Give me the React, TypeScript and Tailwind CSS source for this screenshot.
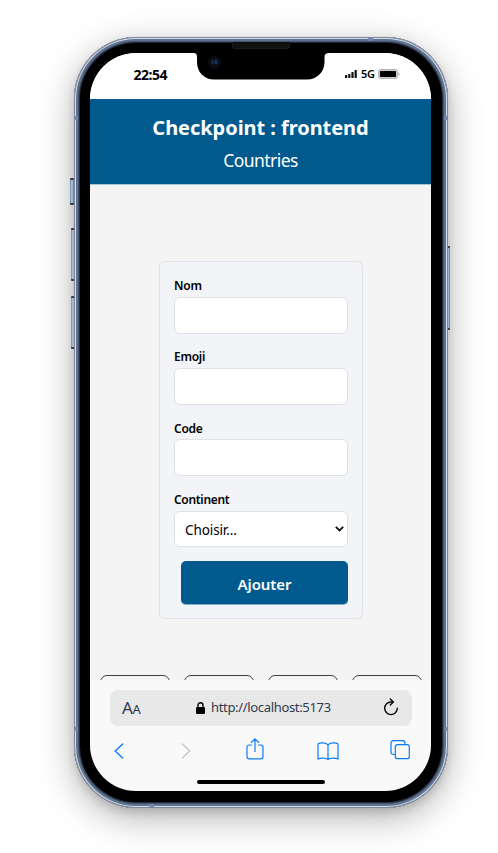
import React from "react";

function Field({ label }: { label: string }) {
  return (
    <label className="block h-[71.4px]">
      <span className="block h-[19.7px] text-[12px] leading-[18.6px] font-semibold tracking-[-0.25px]">{label}</span>
      <input className="block h-[37px] w-[174px] rounded-[6px] border border-[#dee1e6] bg-white px-2.5" />
    </label>
  );
}

function SideButton({ place }: { place: string }) {
  return (
    <div
      className={`absolute w-1 rounded-[1px] border-y-2 border-[#343e50] bg-gradient-to-r from-[#7587a5] via-[#b9cae3] to-[#5d7090] ${place}`}
    />
  );
}

function Notch() {
  return (
    <div className="absolute top-0 left-[103px] h-[27px] w-[136px]">
      <svg width="136" height="27" viewBox="0 0 136 27" className="block">
        <path d="M0 0H136C133 0 131.500 1 131.500 4V9C131.500 19 124 26.500 114 26.500H21C11 26.500 4 19 4 9V4C4 1 3 0 0 0Z" fill="#000" />
        <circle cx="21.500" cy="9.500" r="6.500" fill="#0b0d10" />
        <ellipse cx="19.500" cy="9" rx="1.300" ry="2.500" fill="#19303f" />
        <ellipse cx="23" cy="9" rx="1.400" ry="2.500" fill="#1e3478" />
      </svg>
      <div className="absolute -top-[11px] left-[39px] h-[7px] w-[58px] rounded-b-[3px] border border-t-0 border-[#1a1a1a] bg-[#101010]" />
    </div>
  );
}

function StatusBar() {
  return (
    <div className="flex h-[46px] shrink-0 items-start justify-between bg-white pl-[43.500px] pr-[31px] text-black">
      <span className="mt-[13px] text-[14px] leading-[18px] font-bold tracking-[-0.5px]">22:54</span>
      <div className="mt-[13px] flex h-4 items-center">
        <svg width="12" height="9" viewBox="0 0 12 9" fill="#111">
          <rect x="0" y="5" width="2.200" height="3" rx=".5" />
          <rect x="3.200" y="4" width="2.200" height="4" rx=".5" />
          <rect x="6.400" y="2" width="2.200" height="6" rx=".5" />
          <rect x="9.600" y="0" width="2.200" height="8" rx=".5" />
        </svg>
        <span className="ml-1 w-[14px] text-[11px] leading-4 font-semibold tracking-[-0.4px]">5G</span>
        <svg width="22" height="10" viewBox="0 0 22 10" className="ml-[3px]">
          <rect x=".5" y=".5" width="19" height="9" rx="2" fill="#ccc" stroke="#b4b4b4" />
          <rect x="2" y="2" width="16" height="6" rx=".7" fill="#000" />
          <path d="M20.500 3.200q1.300.500 1.300 1.800t-1.300 1.800z" fill="#aaa" />
        </svg>
      </div>
    </div>
  );
}

function CountryForm() {
  return (
    <form className="mt-[76px] ml-[69px] h-[358px] w-[203.500px] rounded-[6px] border border-[#dee1e6] bg-[#f2f4f7] pt-[15px] pl-[14px] text-black">
      <Field label="Nom" />
      <Field label="Emoji" />
      <Field label="Code" />
      <div className="h-[69.8px]">
        <span className="block h-[19.7px] text-[12px] leading-[18.6px] font-semibold tracking-[-0.32px]">Continent</span>
        <button
          type="button"
          className="flex h-[36px] w-[174px] items-center justify-between rounded-[6px] border border-[#dee1e6] bg-white pr-[3px] pl-[10px] text-[13.500px]"
        >
          <span className="pt-[2px] tracking-[-0.1px]">Choisir...</span>
          <svg width="9" height="6" viewBox="0 0 9 6" fill="none" stroke="#111" strokeWidth="1.800">
            <path d="M.8.900 4.500 4.400 8.200.900" />
          </svg>
        </button>
      </div>
      <button
        type="button"
        className="ml-[7px] block h-[44px] w-[167px] rounded-[5px] border-b border-[#86adc8] bg-[#005a8d] pt-[3px] text-[15px] font-semibold tracking-[-0.1px] text-white"
      >
        Ajouter
      </button>
    </form>
  );
}

function AddressBar() {
  return (
    <div className="mx-5 flex h-9 w-[302px] items-center rounded-[8px] bg-[#e8e8e8]">
      <span className="ml-3 w-[74px] text-[17px] leading-9 tracking-[-0.3px] text-[#2f3a4e]">
        A<span className="text-[13px]">A</span>
      </span>
      <svg width="9" height="12" viewBox="0 0 9 12">
        <path d="M2 5.500V3.300a2.500 2.500 0 0 1 5 0v2.200" fill="none" stroke="#000" strokeWidth="1.400" />
        <rect y="5" width="9" height="7" rx="1.200" />
      </svg>
      <span className="ml-1.5 w-[172px] pb-[2px] text-[13px] leading-[34px] tracking-[-0.33px] text-[#2f3a4e]">http://localhost:5173</span>
      <svg width="16" height="18" viewBox="0 0 16 18" fill="none" stroke="#0a0a0a" strokeWidth="1.400" strokeLinecap="round" className="mb-[2px]">
        <path d="M9.800 4H8a6.300 6.300 0 1 0 6.300 6.300" />
        <path d="m7.300 1 3 3-3 3" />
      </svg>
    </div>
  );
}

function BrowserNav() {
  return (
    <div className="mt-[11px] flex h-[28px] items-center pl-[24px] text-[#087cff]">
      <svg width="10" height="16" viewBox="0 0 10 16" fill="none" stroke="currentColor" strokeWidth="1.400" strokeLinecap="round">
        <path d="M8.700 1 1.200 8l7.500 7" />
      </svg>
      <svg width="10" height="16" viewBox="0 0 10 16" fill="none" stroke="#c8c8c8" strokeWidth="1.400" strokeLinecap="round" className="ml-[57px]">
        <path d="m1.300 1 7.500 7-7.500 7" />
      </svg>
      <svg width="18" height="22" viewBox="0 0 18 22" fill="none" stroke="currentColor" strokeWidth="1.200" strokeLinecap="round" strokeLinejoin="round" className="mb-1 ml-[55px]">
        <path d="M5.500 7H3.300C1.800 7 1 7.800 1 9.300v9.200c0 1.500.8 2.300 2.300 2.300h11.400c1.500 0 2.300-.8 2.300-2.300V9.300C17 7.800 16.200 7 14.700 7h-2.200M9 13.500V1M5.500 4.300 9 .900l3.500 3.400" />
      </svg>
      <svg width="22" height="19" viewBox="0 0 22 19" fill="none" stroke="currentColor" strokeWidth="1.200" strokeLinejoin="round" className="ml-[53px]">
        <path d="M11 3C9.300.300 3.300.300 1 2v15c2.600-1.300 8-1.300 10 .500V3ZM11 3C12.700.300 18.700.300 21 2v15c-2.600-1.300-8-1.300-10 .500" />
      </svg>
      <svg width="20" height="20" viewBox="0 0 20 20" fill="none" stroke="currentColor" strokeWidth="1.200" className="mb-[3px] ml-[51px]">
        <path d="M5 14.500H3.500Q1 14.500 1 12V3.200Q1 .700 3.500.700h9q2.500 0 2.500 2.500v1.300" />
        <rect x="5.300" y="4.700" width="14" height="14" rx="2.300" />
      </svg>
    </div>
  );
}

export default function App() {
  return (
    <div
      className="h-[853px] w-[498px] overflow-hidden bg-white pt-[37px] pl-[74px]"
      style={{ fontFamily: '"Noto Sans", "Open Sans", sans-serif' }}
    >
      <div className="relative h-[771px] w-[374px] rounded-[62px] shadow-[0_10px_36px_rgba(0,0,0,0.30),0_4px_10px_rgba(0,0,0,0.14)]">
        <SideButton place="top-[141px] -left-[4px] h-[27px]" />
        <SideButton place="top-[191px] -left-[3px] h-[53px]" />
        <SideButton place="top-[259px] -left-[3px] h-[53px]" />
        <SideButton place="top-[209px] -right-[2px] h-[84px]" />
        <div className="relative h-full w-full rounded-[62px] bg-black pt-4 pl-4 shadow-[inset_0_0_0_1px_#7e8796,inset_0_0_0_2px_#d3deec,inset_0_0_0_4px_#5f7291,inset_0_0_0_5px_#44546d,inset_0_0_0_6px_#222b38]">
          <div className="absolute top-[79px] left-0 h-[4px] w-[4px] bg-[#7486a9]" />
          <div className="absolute top-[79px] right-0 h-[4px] w-[4px] bg-[#7486a9]" />
          <div className="absolute bottom-[77px] left-0 h-[4px] w-[4px] bg-[#7486a9]" />
          <div className="absolute right-0 bottom-[77px] h-[4px] w-[4px] bg-[#7486a9]" />
          <div className="absolute top-0 right-[75px] h-[4px] w-[5px] bg-[#7486a9]" />
          <div className="absolute bottom-0 left-[75px] h-[4px] w-[5px] bg-[#7486a9]" />
          <div className="relative h-[738px] w-[341px]">
            <div className="flex h-full w-full flex-col overflow-hidden rounded-[46px] bg-[#f9f9f9]">
              <StatusBar />
              <header className="h-[86px] shrink-0 border-b border-[#a9c6d8] bg-[#005a8d] pt-[14px] text-center text-white">
                <h1 className="text-[20px] leading-[30px] font-bold tracking-[-0.05px]">Checkpoint : frontend</h1>
                <p className="mt-[3px] text-[17.500px] leading-7 tracking-[-0.55px]">Countries</p>
              </header>
              <main className="h-[495px] shrink-0 overflow-hidden bg-[#f4f4f4]">
                <CountryForm />
                <div className="mt-[56px] flex gap-[14px] pl-[9.500px]">
                  <div className="h-24 w-[70px] shrink-0 rounded-[7px] border border-[#3e3e3e]" />
                  <div className="h-24 w-[70px] shrink-0 rounded-[7px] border border-[#3e3e3e]" />
                  <div className="h-24 w-[70px] shrink-0 rounded-[7px] border border-[#3e3e3e]" />
                  <div className="h-24 w-[70px] shrink-0 rounded-[7px] border border-[#3e3e3e]" />
                </div>
              </main>
              <footer className="grow pt-[10px]">
                <AddressBar />
                <BrowserNav />
                <div className="mx-auto mt-[15px] h-1 w-[128px] rounded-full bg-black" />
              </footer>
            </div>
            <Notch />
          </div>
        </div>
      </div>
    </div>
  );
}
